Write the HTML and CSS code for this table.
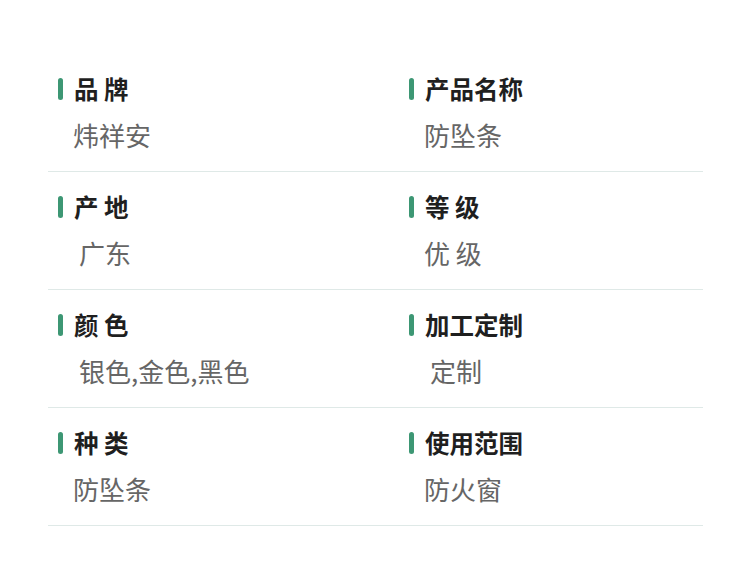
FILE: index.html
```html
<!DOCTYPE html>
<html lang="zh-CN">
<head>
<meta charset="utf-8">
<title>商品参数</title>
<link rel="stylesheet" href="styles.css">
</head>
<body>
<div class="specs">
  <div class="row">
    <div class="cell"><div class="label"><span class="bar"></span><span>品 牌</span></div><div class="value">炜祥安</div></div>
    <div class="cell"><div class="label"><span class="bar"></span><span>产品名称</span></div><div class="value">防坠条</div></div>
  </div>
  <div class="row">
    <div class="cell"><div class="label"><span class="bar"></span><span>产 地</span></div><div class="value indent">广东</div></div>
    <div class="cell"><div class="label"><span class="bar"></span><span>等 级</span></div><div class="value">优 级</div></div>
  </div>
  <div class="row">
    <div class="cell"><div class="label"><span class="bar"></span><span>颜 色</span></div><div class="value indent">银色,金色,黑色</div></div>
    <div class="cell"><div class="label"><span class="bar"></span><span>加工定制</span></div><div class="value indent">定制</div></div>
  </div>
  <div class="row">
    <div class="cell"><div class="label"><span class="bar"></span><span>种 类</span></div><div class="value">防坠条</div></div>
    <div class="cell"><div class="label"><span class="bar"></span><span>使用范围</span></div><div class="value">防火窗</div></div>
  </div>
</div>
</body>
</html>
```

FILE: styles.css
```css
html, body {
  margin: 0;
  padding: 0;
  background: #ffffff;
}
body {
  font-family: "Noto Sans CJK SC", "Noto Sans", sans-serif;
  width: 750px;
  height: 570px;
  overflow: hidden;
}
.specs {
  margin-left: 48px;
  width: 655px;
  padding-top: 54px;
}
.row {
  display: grid;
  grid-template-columns: 351px 1fr;
  border-bottom: 1px solid #dfe9e7;
  height: 117px;
}
.cell {
  padding-left: 10px;
  padding-top: 20px;
}
.label {
  display: flex;
  align-items: center;
  height: 30px;
  font-size: 24.5px;
  line-height: 30px;
  font-weight: 700;
  color: #1f1f1f;
  white-space: pre;
}
.bar {
  width: 5px;
  height: 22px;
  border-radius: 3px;
  background: #3d9774;
  margin-right: 11px;
  flex: none;
}
.value {
  margin-top: 15px;
  margin-left: 15px;
  font-size: 26px;
  line-height: 32px;
  color: #666666;
  white-space: pre;
}
.value.indent {
  padding-left: 6px;
}
```
